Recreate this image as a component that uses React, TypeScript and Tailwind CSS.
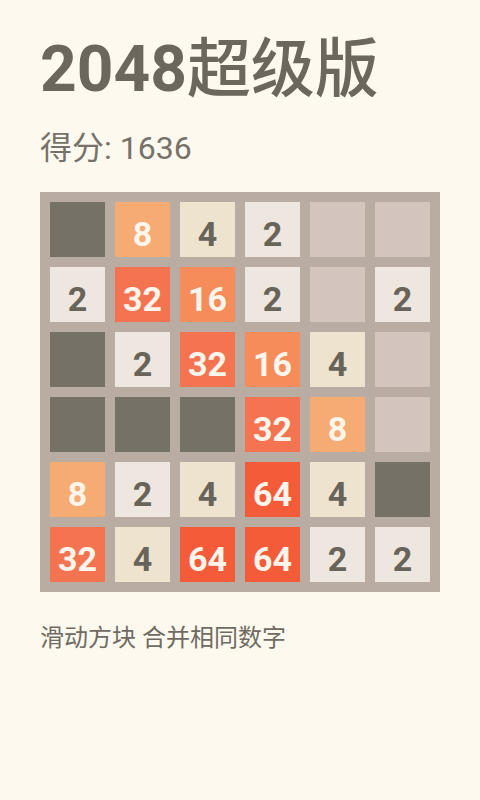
import React from 'react';

type Cell = number | 'x' | null;

const board: Cell[][] = [
  ['x', 8, 4, 2, null, null],
  [2, 32, 16, 2, null, 2],
  ['x', 2, 32, 16, 4, null],
  ['x', 'x', 'x', 32, 8, null],
  [8, 2, 4, 64, 4, 'x'],
  [32, 4, 64, 64, 2, 2],
];

const tileClass = (v: Cell): string => {
  if (v === 'x') return 'bg-[#757166]';
  if (v === null) return 'bg-[#d3c4bd]';
  switch (v) {
    case 2:
      return 'bg-[#eee7df] text-[#69645a]';
    case 4:
      return 'bg-[#eee3cf] text-[#69645a]';
    case 8:
      return 'bg-[#f6ab73] text-[#fcf5ec]';
    case 16:
      return 'bg-[#f68c5a] text-[#fcf5ec]';
    case 32:
      return 'bg-[#f47452] text-[#fcf5ec]';
    default:
      return 'bg-[#f45b38] text-[#fcf5ec]';
  }
};

const latin = "font-['Roboto','Noto_Sans_CJK_SC',sans-serif]";

export default function App() {
  return (
    <div className={`min-h-[800px] w-[480px] bg-[#fdf9ef] px-10 ${latin}`}>
      <h1 className="pt-[32px] text-[64px] font-bold leading-[76px] text-[#6b675d]">
        2048<span className="font-medium">超级版</span>
      </h1>

      <div className="mt-[20px] text-[32px] leading-[40px] text-[#76726a]">得分: 1636</div>

      <div className="mt-[24px] grid w-[400px] grid-cols-6 gap-[10px] bg-[#b9ada3] p-[10px]">
        {board.flat().map((v, i) => (
          <div
            key={i}
            className={`flex h-[55px] w-[55px] items-center justify-center pt-[9px] text-[34px] font-bold leading-none ${tileClass(v)}`}
          >
            {typeof v === 'number' ? v : ''}
          </div>
        ))}
      </div>

      <p className="mt-[30px] text-[24px] leading-[32px] text-[#6f6b62]">滑动方块 合并相同数字</p>
    </div>
  );
}
